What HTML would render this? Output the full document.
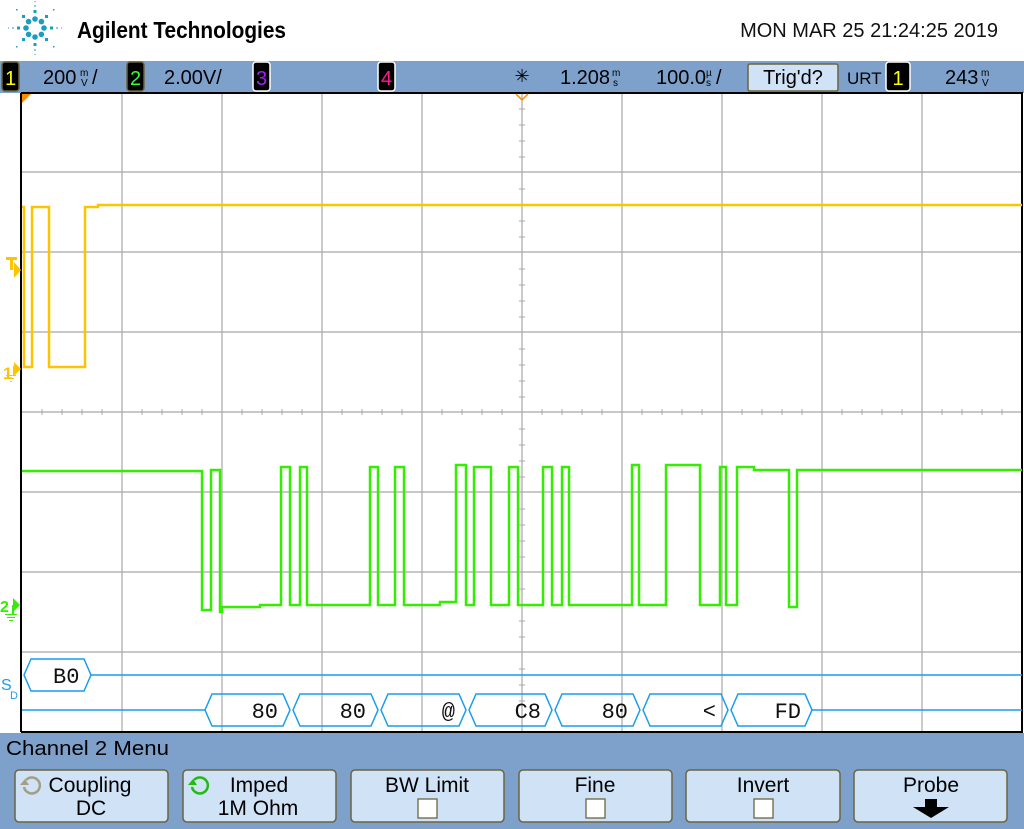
<!DOCTYPE html>
<html><head><meta charset="utf-8"><style>
body{margin:0;width:1024px;height:829px;overflow:hidden;background:#fff;font-family:"Liberation Sans",sans-serif;}
svg{display:block}
</style></head><body>
<svg width="1024" height="829" xmlns="http://www.w3.org/2000/svg" font-family="Liberation Sans, sans-serif">
<rect width="1024" height="829" fill="#fff"/>
<!-- logo -->
<g fill="#1e9cc0">
<circle cx="35" cy="19" r="2.8"/><circle cx="41.4" cy="21.6" r="2.8"/><circle cx="44" cy="28" r="2.8"/><circle cx="41.4" cy="34.4" r="2.8"/><circle cx="35" cy="37" r="2.8"/><circle cx="28.6" cy="34.4" r="2.8"/><circle cx="26" cy="28" r="2.8"/><circle cx="28.6" cy="21.6" r="2.8"/>
<rect x="33.5" y="10" width="3" height="3"/><rect x="45" y="15" width="3" height="3"/><rect x="50" y="26.5" width="3" height="3"/><rect x="45" y="38" width="3" height="3"/><rect x="33.5" y="43" width="3" height="3"/><rect x="22" y="38" width="3" height="3"/><rect x="17" y="26.5" width="3" height="3"/><rect x="22" y="15" width="3" height="3"/>
<rect x="34.5" y="5" width="1" height="2"/><rect x="34.5" y="49" width="1" height="2"/><rect x="56" y="27.5" width="2" height="1"/><rect x="12" y="27.5" width="2" height="1"/>
<rect x="34.5" y="1" width="1" height="1"/><rect x="34.5" y="54" width="1" height="1"/><rect x="61" y="27.5" width="1" height="1"/><rect x="8" y="27.5" width="1" height="1"/>
<rect x="16" y="9" width="1.5" height="1.5"/><rect x="53" y="9" width="1.5" height="1.5"/><rect x="16" y="46" width="1.5" height="1.5"/><rect x="53" y="46" width="1.5" height="1.5"/>
</g>
<text x="77" y="38" font-size="23" font-weight="bold" fill="#000" textLength="209" lengthAdjust="spacingAndGlyphs">Agilent Technologies</text>
<text x="998" y="37" font-size="20" fill="#111" text-anchor="end">MON MAR 25 21:24:25 2019</text>
<!-- top bar -->
<rect x="0" y="61" width="1024" height="32" fill="#7ea1cc"/>
<g font-size="20">
<rect x="2" y="62" width="17" height="29" rx="3" fill="#000" stroke="#6b6440" stroke-width="1.5"/><text x="10.5" y="85" fill="#ff0" text-anchor="middle">1</text>
<text x="43" y="84" fill="#000">200</text><text x="80" y="76" font-size="10" fill="#000">m</text><text x="81" y="86" font-size="10" fill="#000">V</text><text x="92" y="84" fill="#000">/</text>
<rect x="127" y="62" width="17" height="29" rx="3" fill="#000" stroke="#6b6440" stroke-width="1.5"/><text x="135.5" y="85" fill="#3f3" text-anchor="middle">2</text>
<text x="164" y="84" fill="#000">2.00V/</text>
<rect x="253" y="62" width="17" height="29" rx="3" fill="#000" stroke="#fff" stroke-width="1.5"/><text x="261.5" y="85" fill="#a020f0" text-anchor="middle">3</text>
<rect x="378" y="62" width="17" height="29" rx="3" fill="#000" stroke="#fff" stroke-width="1.5"/><text x="386.5" y="85" fill="#ff1a8c" text-anchor="middle">4</text>
<text x="522" y="82" font-size="18" fill="#000" text-anchor="middle">✳</text>
<text x="560" y="84" fill="#000">1.208</text><text x="612" y="76" font-size="10" fill="#000">m</text><text x="613" y="86" font-size="10" fill="#000">s</text>
<text x="656" y="84" fill="#000">100.0</text><text x="706" y="76" font-size="10" fill="#000">µ</text><text x="706" y="86" font-size="10" fill="#000">s</text><text x="716" y="84" fill="#000">/</text>
<rect x="748" y="64" width="90" height="27" rx="2" fill="#d0e2f6" stroke="#6b6440" stroke-width="1.5"/><text x="793" y="84" fill="#000" text-anchor="middle">Trig'd?</text>
<text x="847" y="84" font-size="17" fill="#000">URT</text>
<rect x="886" y="62" width="24" height="29" rx="3" fill="#000" stroke="#fff" stroke-width="1.5"/><text x="898" y="85" fill="#ff0" text-anchor="middle">1</text>
<text x="945" y="84" fill="#000">243</text><text x="981" y="76" font-size="10" fill="#000">m</text><text x="982" y="86" font-size="10" fill="#000">V</text>
</g>
<!-- grid -->
<g stroke="#a8a8a8" stroke-width="1.2">
<path d="M122,93V732M222,93V732M322,93V732M422,93V732M522,93V732M622,93V732M722,93V732M822,93V732M922,93V732"/>
<path d="M22,172H1022M22,252H1022M22,332H1022M22,412H1022M22,492H1022M22,572H1022M22,652H1022"/>
</g>
<g stroke="#a8a8a8" stroke-width="1">
<path d="M42,409V415M62,409V415M82,409V415M102,409V415M142,409V415M162,409V415M182,409V415M202,409V415M242,409V415M262,409V415M282,409V415M302,409V415M342,409V415M362,409V415M382,409V415M402,409V415M442,409V415M462,409V415M482,409V415M502,409V415M542,409V415M562,409V415M582,409V415M602,409V415M642,409V415M662,409V415M682,409V415M702,409V415M742,409V415M762,409V415M782,409V415M802,409V415M842,409V415M862,409V415M882,409V415M902,409V415M942,409V415M962,409V415M982,409V415M1002,409V415"/>
<path d="M519,109H525M519,125H525M519,141H525M519,157H525M519,189H525M519,205H525M519,221H525M519,237H525M519,269H525M519,285H525M519,301H525M519,317H525M519,349H525M519,365H525M519,381H525M519,397H525M519,429H525M519,445H525M519,461H525M519,477H525M519,509H525M519,525H525M519,541H525M519,557H525M519,589H525M519,605H525M519,621H525M519,637H525M519,669H525M519,685H525M519,701H525M519,717H525"/>
</g>
<path d="M21,93V732M21,93H1022V732H21" fill="none" stroke="#000" stroke-width="2"/>
<path d="M22,94h9l-9,9z" fill="#ff8a00"/>
<path d="M516,94l6,6l6,-6" fill="none" stroke="#ff8a00" stroke-width="1.5"/>
<!-- yellow -->
<path d="M22,207H24V367H32V207H49V367H85V207H98V205H1022" fill="none" stroke="#ffc400" stroke-width="2.5"/>
<!-- green -->
<path d="M22,471H202V610H211V470H220V612H222V607H260V605H281V467H290V605H300V467H307V605H370V467H378V605H395V467H404V605H440V602H456V465H466V605H474V467H491V605H509V467H518V605H543V467H552V605H562V467H569V605H632V465H639V605H666V465H700V605H720V467H726V605H737V467H754V470H789V607H797V470H1022" fill="none" stroke="#33ee00" stroke-width="2.5"/>
<!-- markers -->
<g fill="#ffc400"><rect x="6" y="257" width="11" height="3"/><rect x="10" y="257" width="3" height="13"/><path d="M14,262l7,8l-7,8z"/>
<text x="3" y="379" font-size="17" font-weight="bold" fill="#ffc400">1</text><path d="M14,362l7,7l-7,7z"/><rect x="13" y="366" width="2" height="9"/><rect x="6" y="375" width="10" height="1"/><rect x="8" y="378" width="6" height="1"/><rect x="10" y="381" width="2" height="1"/></g>
<g fill="#33ee00"><text x="0" y="612" font-size="16" font-weight="bold" fill="#33ee00">2</text><path d="M13,598l7,7l-7,7z"/><rect x="12" y="605" width="2" height="9"/><rect x="5" y="614" width="12" height="1"/><rect x="7" y="617" width="8" height="1"/><rect x="9" y="620" width="4" height="1"/></g>
<text x="1" y="690" font-size="16" fill="#1a9cf0">S</text><text x="10" y="699" font-size="11" fill="#1a9cf0">D</text>
<!-- bus -->
<g fill="none" stroke="#1a9cf0" stroke-width="1.5">
<path d="M91,675H1022M22,710H205M812,710H1022"/>
<polygon points="24,675 31,659 84,659 91,675 84,691 31,691"/>
<polygon points="205,710 212,694 283,694 290,710 283,726 212,726"/>
<polygon points="293,710 300,694 371,694 378,710 371,726 300,726"/>
<polygon points="381,710 388,694 459,694 466,710 459,726 388,726"/>
<polygon points="469,710 476,694 545,694 552,710 545,726 476,726"/>
<polygon points="555,710 562,694 633,694 640,710 633,726 562,726"/>
<polygon points="643,710 650,694 721,694 728,710 721,726 650,726"/>
<polygon points="731,710 738,694 805,694 812,710 805,726 738,726"/>
</g>
<g font-family="Liberation Mono, monospace" font-size="22" fill="#111">
<text x="53" y="683">B0</text>
<text x="278" y="718" text-anchor="end">80</text>
<text x="366" y="718" text-anchor="end">80</text>
<text x="455" y="718" text-anchor="end">@</text>
<text x="541" y="718" text-anchor="end">C8</text>
<text x="628" y="718" text-anchor="end">80</text>
<text x="716" y="718" text-anchor="end">&lt;</text>
<text x="801" y="718" text-anchor="end">FD</text>
</g>
<!-- menu -->
<rect x="0" y="733" width="1024" height="96" fill="#7ea1cc"/>
<text x="6" y="755" font-size="20" fill="#000" textLength="163" lengthAdjust="spacingAndGlyphs">Channel 2  Menu</text>
<g stroke="#6b6440" stroke-width="1.5" fill="#d0e2f6">
<rect x="15" y="770" width="153" height="52" rx="4"/>
<rect x="183" y="770" width="153" height="52" rx="4"/>
<rect x="351" y="770" width="153" height="52" rx="4"/>
<rect x="519" y="770" width="153" height="52" rx="4"/>
<rect x="686" y="770" width="154" height="52" rx="4"/>
<rect x="854" y="770" width="153" height="52" rx="4"/>
</g>
<g font-size="21" fill="#000" text-anchor="middle">
<text x="90" y="792">Coupling</text><text x="91" y="815">DC</text>
<text x="259" y="792">Imped</text><text x="258" y="815">1M Ohm</text>
<text x="427" y="792">BW Limit</text>
<text x="595" y="792">Fine</text>
<text x="763" y="792">Invert</text>
<text x="931" y="792">Probe</text>
</g>
<g fill="#fff" stroke="#6b6440" stroke-width="1.3">
<rect x="418" y="799" width="19" height="19"/><rect x="586" y="799" width="19" height="19"/><rect x="754" y="799" width="19" height="19"/>
</g>
<path d="M925,799h12v8h12l-18,11l-18,-11h12z" fill="#000"/>
<g fill="none" stroke-width="2.5">
<path d="M26,780a8,8 0 1 1 -2,7" stroke="#a39e86"/><path d="M20,785l5,-6l4,6z" fill="#a39e86" stroke="none"/>
<path d="M194,780a8,8 0 1 1 -2,7" stroke="#22bb11"/><path d="M188,785l5,-6l4,6z" fill="#22bb11" stroke="none"/>
</g>
</svg>
</body></html>
